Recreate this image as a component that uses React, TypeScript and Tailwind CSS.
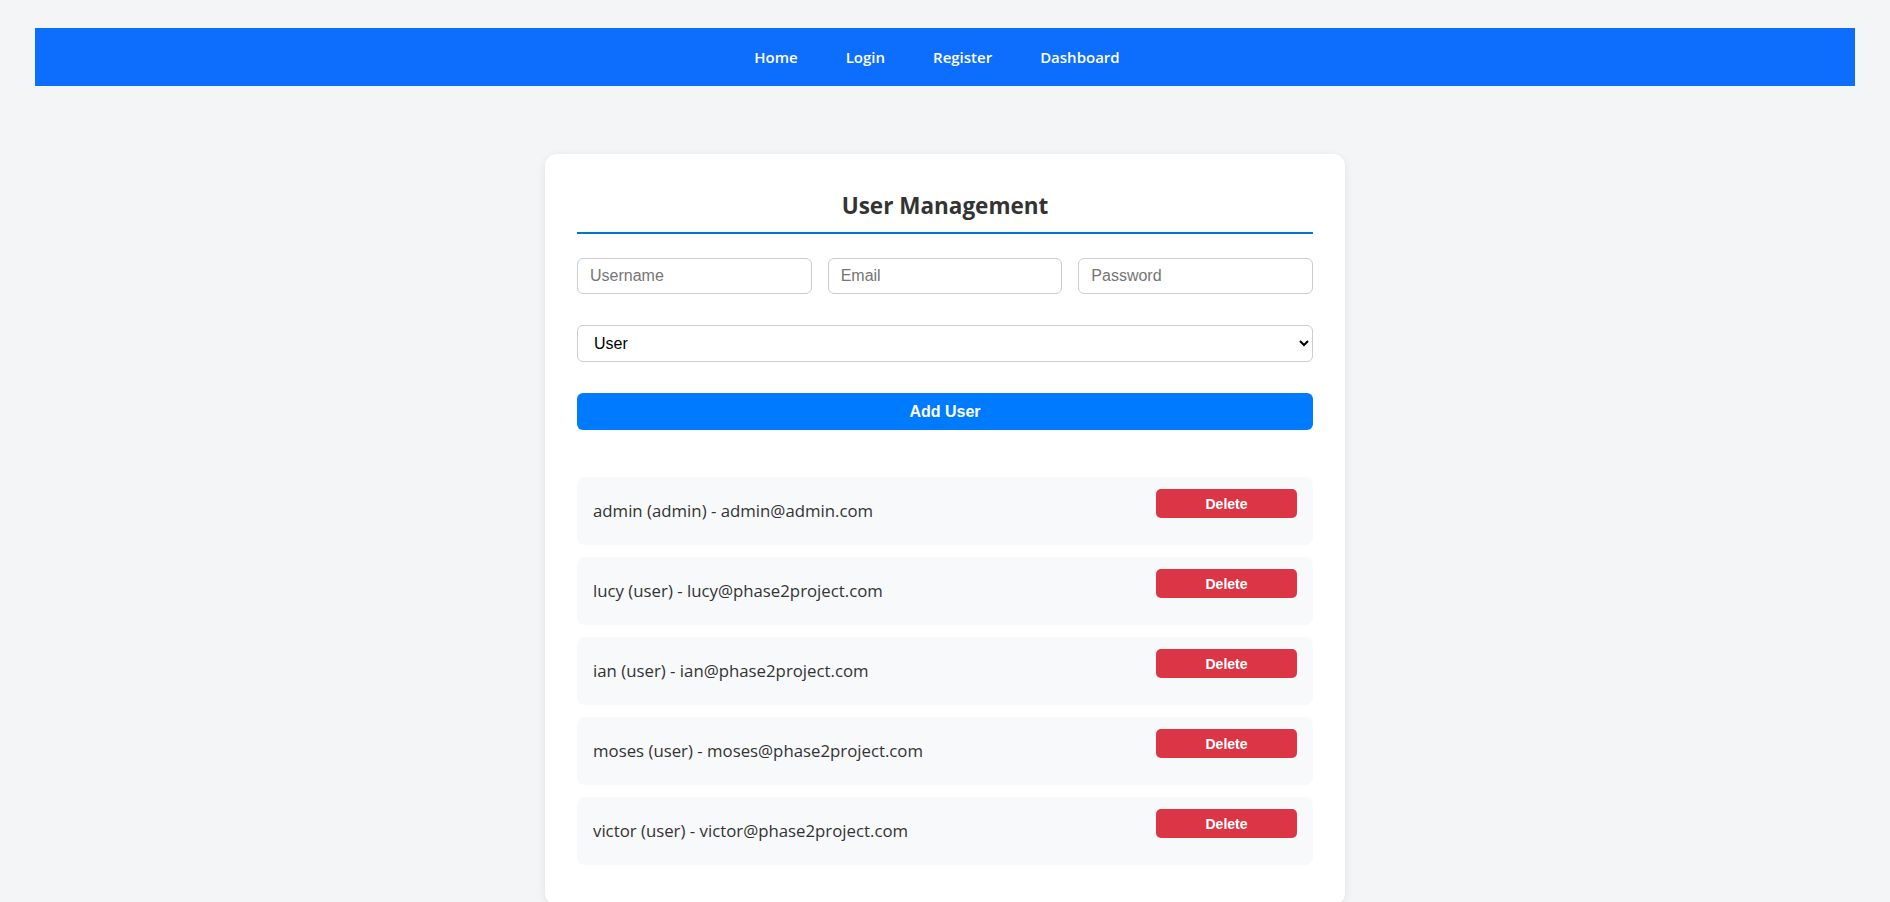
import { useState } from "react";

type User = { id: number; username: string; role: string; email: string };

const initialUsers: User[] = [
  { id: 1, username: "admin", role: "admin", email: "admin@admin.com" },
  { id: 2, username: "lucy", role: "user", email: "lucy@phase2project.com" },
  { id: 3, username: "ian", role: "user", email: "ian@phase2project.com" },
  { id: 4, username: "moses", role: "user", email: "moses@phase2project.com" },
  { id: 5, username: "victor", role: "user", email: "victor@phase2project.com" },
];

const navItems = ["Home", "Login", "Register", "Dashboard"];

export default function App() {
  const [users, setUsers] = useState<User[]>(initialUsers);

  return (
    <div className="min-h-screen bg-[#f4f5f7] px-[35px] pt-[28px] font-['Open_Sans',sans-serif]">
      <nav className="flex h-[58px] items-center justify-center gap-[48px] bg-[#0d6efd] pr-[16px] text-[15px] font-semibold text-white">
        {navItems.map((item) => (
          <a key={item} href="#" className="hover:underline">
            {item}
          </a>
        ))}
      </nav>

      <div className="mx-auto mt-[68px] w-[800px] rounded-xl bg-white px-8 pt-8 pb-10 shadow-[0_2px_10px_rgba(0,0,0,0.08)]">
        <h2 className="border-b-2 border-[#0077cc] pb-[6px] text-center text-[22.5px] leading-[40px] font-bold text-[#333]">
          User Management
        </h2>

        <div className="mt-6 grid grid-cols-3 gap-4 font-['Liberation_Sans',Arial,sans-serif]">
          {["Username", "Email", "Password"].map((p) => (
            <input
              key={p}
              type={p === "Password" ? "password" : "text"}
              placeholder={p}
              className="h-9 rounded-md border border-[#ccc] px-3 text-base placeholder:text-[#757575] focus:outline-none"
            />
          ))}
        </div>

        <select className="mt-[31px] h-[37px] w-full rounded-md border border-[#ccc] bg-white px-3 font-['Liberation_Sans',Arial,sans-serif] text-base text-black">
          <option>User</option>
          <option>Admin</option>
        </select>

        <button className="mt-[31px] h-[37px] w-full rounded-md bg-[#007bff] font-['Liberation_Sans',Arial,sans-serif] text-base font-bold text-white">
          Add User
        </button>

        <ul className="mt-[47px] flex flex-col gap-3">
          {users.map((u) => (
            <li key={u.id} className="flex h-[68px] justify-between rounded-lg bg-[#f8f9fa] px-4 py-3">
              <span className="self-center text-[16.8px] text-[#333]">
                {u.username} ({u.role}) - {u.email}
              </span>
              <button
                onClick={() => setUsers(users.filter((x) => x.id !== u.id))}
                className="h-[29px] w-[141px] rounded-[5px] bg-[#dc3545] font-['Liberation_Sans',Arial,sans-serif] text-sm font-bold text-white"
              >
                Delete
              </button>
            </li>
          ))}
        </ul>
      </div>
    </div>
  );
}
